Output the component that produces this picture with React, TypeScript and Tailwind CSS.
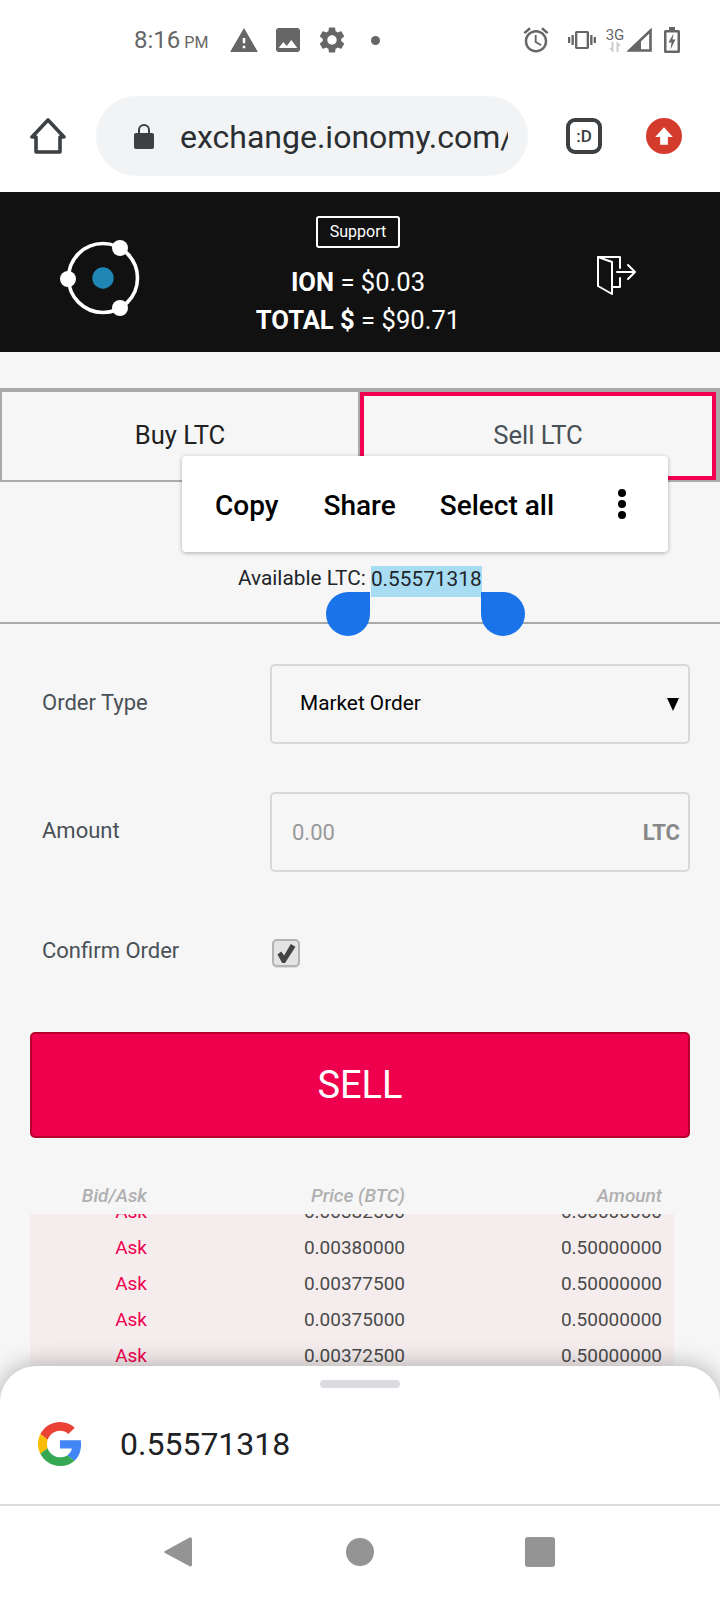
const warning = "M1 21h22L12 2 1 21zm12-3h-2v-2h2v2zm0-4h-2v-4h2v4z";
const image = "M21 19V5c0-1.1-.9-2-2-2H5c-1.1 0-2 .9-2 2v14c0 1.1.9 2 2 2h14c1.1 0 2-.9 2-2zM8.5 13.5l2.5 3.01L14.5 12l4.5 6H5l3.5-4.5z";
const gear = "M19.14 12.94c.04-.3.06-.61.06-.94 0-.32-.02-.64-.07-.94l2.03-1.58a.49.49 0 0 0 .12-.61l-1.92-3.32a.488.488 0 0 0-.59-.22l-2.39.96c-.5-.38-1.03-.7-1.62-.94l-.36-2.54a.484.484 0 0 0-.48-.41h-3.84c-.24 0-.43.17-.47.41l-.36 2.54c-.59.24-1.13.57-1.62.94l-2.39-.96c-.22-.08-.47 0-.59.22L2.74 8.87c-.12.21-.08.47.12.61l2.03 1.58c-.05.3-.09.63-.09.94s.02.64.07.94l-2.03 1.58a.49.49 0 0 0-.12.61l1.92 3.32c.12.22.37.29.59.22l2.39-.96c.5.38 1.03.7 1.62.94l.36 2.54c.05.24.24.41.48.41h3.84c.24 0 .44-.17.47-.41l.36-2.54c.59-.24 1.13-.56 1.62-.94l2.39.96c.22.08.47 0 .59-.22l1.92-3.32c.12-.22.07-.47-.12-.61l-2.01-1.58zM12 15.6c-1.98 0-3.6-1.62-3.6-3.6s1.62-3.6 3.6-3.6 3.6 1.62 3.6 3.6-1.62 3.6-3.6 3.6z";
const alarm = "M22 5.72l-4.6-3.86-1.29 1.53 4.6 3.86L22 5.72zM7.88 3.39L6.6 1.86 2 5.71l1.29 1.53 4.59-3.85zM12.5 8H11v6l4.75 2.85.75-1.23-4-2.37V8zM12 4c-4.97 0-9 4.03-9 9s4.02 9 9 9c4.97 0 9-4.03 9-9s-4.03-9-9-9zm0 16c-3.87 0-7-3.13-7-7s3.13-7 7-7 7 3.13 7 7-3.13 7-7 7z";
const vibrate = "M0 15h2V9H0v6zm3 2h2V7H3v10zm19-8v6h2V9h-2zm-3 8h2V7h-2v10zM16.5 3h-9C6.67 3 6 3.67 6 4.5v15c0 .83.67 1.5 1.5 1.5h9c.83 0 1.5-.67 1.5-1.5v-15c0-.83-.67-1.5-1.5-1.5zM16 19H8V5h8v14z";

function M({ d, w, h, c = "" }: { d: string; w: string; h: string; c?: string }) {
  return (
    <svg viewBox="0 0 24 24" className={`${w} ${h} ${c}`} preserveAspectRatio="none" fill="#666666">
      <path d={d} />
    </svg>
  );
}

const rows = [
  ["0.00382500", "-mt-[20px]"],
  ["0.00380000", ""],
  ["0.00377500", ""],
  ["0.00375000", ""],
  ["0.00372500", ""],
];

export default function App() {
  return (
    <div className="relative h-[1600px] w-[720px] overflow-hidden bg-[#f6f6f6] font-['Roboto',sans-serif]">
      {/* status bar */}
      <div className="flex h-[96px] items-start bg-white pt-[26px]">
        <div className="flex h-[28px] items-center">
          <div className="ml-[134px] flex w-[94px] items-baseline pt-[3px] text-[#666666]">
            <span className="text-[24px] leading-[28px]">8:16</span>
            <span className="ml-[4px] text-[16px] leading-[28px]">PM</span>
          </div>
          <svg viewBox="1 2 22 19" className="ml-[2px] h-[24px] w-[28px]" fill="#666666"><path d={warning} /></svg>
          <svg viewBox="3 3 18 18" className="ml-[18px] h-[24px] w-[24px]" fill="#666666"><path d={image} /></svg>
          <svg viewBox="2.5 2 19 20" className="ml-[19px] h-[26px] w-[26px]" fill="#666666"><path d={gear} /></svg>
          <div className="ml-[26px] h-[9px] w-[9px] rounded-full bg-[#666666]" />
        </div>
        <div className="ml-[141px] flex h-[28px] items-center">
          <M d={alarm} w="w-[30px]" h="h-[30px]" />
          <M d={vibrate} w="w-[28px]" h="h-[24px]" c="ml-[17px]" />
          <div className="ml-[9px] h-[26px] w-[20px] self-end">
            <span className="block text-center text-[15px] leading-[14px] text-[#666666]">3G</span>
            <svg viewBox="0 0 20 10" className="h-[10px] w-[20px]" fill="#cccccc">
              <path d="M6.5 0h2v10h-1L4 6h2.5zM11.5 10h2V4H16l-3.5-4h-1z" />
            </svg>
          </div>
          <svg viewBox="0 0 25 24" className="ml-[2px] h-[24px] w-[25px]" fill="none">
            <path d="M23.5 2.5v20H2.5z" stroke="#666666" strokeWidth="2.6" />
            <path d="M2.5 22.5L14 11v11.5z" fill="#666666" />
          </svg>
          <svg viewBox="0 0 16 26" className="ml-[12px] h-[26px] w-[16px]">
            <path d="M5 0h6v3h3.5A1.5 1.5 0 0 1 16 4.5v20a1.5 1.5 0 0 1-1.5 1.5h-13A1.5 1.5 0 0 1 0 24.5v-20A1.5 1.5 0 0 1 1.5 3H5z" fill="#666666" />
            <rect x="2.5" y="5.5" width="11" height="18" fill="#ffffff" />
            <path d="M9.5 6.5L4.5 15.5h3l-1 7 5-10h-3z" fill="#666666" />
          </svg>
        </div>
      </div>

      {/* browser toolbar */}
      <div className="flex h-[96px] items-start bg-white">
        <svg viewBox="0 0 36 36" className="ml-[30px] mt-[22px] h-[36px] w-[36px]" fill="none">
          <path d="M18 2L2 19h4v15h24V19h4z" stroke="#3c4043" strokeWidth="3.6" strokeLinejoin="round" />
        </svg>
        <div className="ml-[30px] flex h-[80px] w-[432px] items-center rounded-full bg-[#f1f3f4] pl-[38px]">
          <svg viewBox="0 0 20 26" className="h-[26px] w-[20px]" fill="#3c4043">
            <path d="M2 10h2V7a6 6 0 0 1 12 0v3h2a2 2 0 0 1 2 2v12a2 2 0 0 1-2 2H2a2 2 0 0 1-2-2V12a2 2 0 0 1 2-2zm4 0h8V7a4 4 0 0 0-8 0z" />
          </svg>
          <div className="ml-[26px] w-[328px] overflow-hidden whitespace-nowrap pt-[2px] text-[32px] leading-[40px] text-[#2b2e31]">exchange.ionomy.com/</div>
        </div>
        <div className="ml-[38px] mt-[22px] flex h-[36px] w-[36px] items-center justify-center rounded-[9px] border-[4px] border-[#3c4043] text-[17px] font-medium leading-none text-[#3c4043]">:D</div>
        <div className="ml-[44px] mt-[22px] flex h-[36px] w-[36px] items-center justify-center rounded-full bg-[#d33b2c]">
          <svg viewBox="0 0 20 20" className="h-[22px] w-[22px]" fill="#ffffff"><path d="M10 2l8 9h-4.5v7h-7v-7H2z" /></svg>
        </div>
      </div>

      {/* site header */}
      <div className="flex h-[160px] items-start bg-[#111111] text-white">
        <div className="w-[200px] pl-[58px] pt-[42px]">
          <svg viewBox="0 0 88 84" className="h-[84px] w-[88px]">
            <circle cx="45" cy="44" r="34.5" fill="none" stroke="#ffffff" strokeWidth="3.6" />
            <circle cx="62" cy="14" r="8" fill="#ffffff" />
            <circle cx="10" cy="45" r="8" fill="#ffffff" />
            <circle cx="62" cy="74" r="8" fill="#ffffff" />
            <circle cx="45" cy="44" r="10.7" fill="#1f86b5" />
          </svg>
        </div>
        <div className="flex w-[316px] flex-col items-center pt-[24px]">
          <div className="flex h-[32px] w-[84px] items-center justify-center rounded-[3px] border-2 border-white text-[16px]">Support</div>
          <div className="mt-[15px] text-[25.6px] leading-[38px]"><b className="font-bold">ION</b> = $0.03</div>
          <div className="text-[25.6px] leading-[38px]"><b className="font-bold">TOTAL $</b> = $90.71</div>
        </div>
        <svg viewBox="0 0 42 42" className="ml-[79px] mt-[63px] h-[42px] w-[42px]" fill="none" stroke="#ffffff" strokeWidth="2" strokeLinejoin="round" strokeLinecap="round">
          <path d="M3 2h22v11M25 23v9h-8" />
          <path d="M3 2l14 5v32L3 31z" />
          <path d="M22 17h18M33 10l7 7-7 7" />
        </svg>
      </div>

      {/* buy / sell */}
      <div className="mt-[36px] flex h-[94px] border-b-[2px] border-t-[4px] border-[#aaaaaa]">
        <div className="flex w-[360px] items-center justify-center border-x-[2px] border-[#aaaaaa] pb-[2px] text-[25.6px] text-[#222222]">Buy LTC</div>
        <div className="flex w-[360px] bg-[#aaaaaa] pr-[4px]">
          <div className="flex w-full items-center justify-center border-[4px] border-[#f0004e] bg-[#f6f6f6] pb-[2px] text-[25.6px] text-[#495057]">Sell LTC</div>
        </div>
      </div>

      {/* available */}
      <div className="mt-[85px] flex h-[24px] items-center pl-[238px] text-[20.8px] text-[#212529]">
        Available LTC:&nbsp;<span className="mt-[4px] inline-block h-[31px] bg-[#a8dcf3] leading-[27px]">0.55571318</span>
      </div>
      <div className="mt-[31px] h-[2px] bg-[#aaaaaa]" />

      {/* form */}
      <div className="mt-[40px] flex h-[80px] items-center pl-[42px]">
        <div className="w-[228px] pb-[4px] text-[22px] text-[#495057]">Order Type</div>
        <div className="flex h-full w-[420px] items-center justify-between rounded-[5px] border-2 border-[#d8d8d8] pl-[28px] pr-[9px] text-[20.8px] text-black">
          <span>Market Order</span>
          <span className="h-0 w-0 border-x-[6px] border-t-[13px] border-x-transparent border-t-black" />
        </div>
      </div>
      <div className="mt-[48px] flex h-[80px] items-center pl-[42px]">
        <div className="w-[228px] pb-[4px] text-[22px] text-[#495057]">Amount</div>
        <div className="flex h-full w-[420px] items-center justify-between rounded-[5px] border-2 border-[#d8d8d8] pl-[20px] pr-[8px] text-[22px]">
          <span className="text-[#999999]">0.00</span>
          <span className="font-bold text-[#888888]">LTC</span>
        </div>
      </div>
      <div className="mt-[66px] flex h-[30px] items-center pl-[42px]">
        <div className="w-[230px] pb-[6px] text-[22px] text-[#495057]">Confirm Order</div>
        <div className="flex h-[28px] w-[28px] items-center justify-center rounded-[5px] border-2 border-[#b4b4b4] bg-[#e4e4e4] shadow-[0_1px_0_#dddddd]">
          <svg viewBox="0 0 20 20" className="h-[19px] w-[20px]" fill="#444444"><path d="M1 11l4-3 3 4L15 0l5 3L9 20H6z" /></svg>
        </div>
      </div>

      {/* sell button */}
      <div className="mx-[30px] mt-[64px] flex h-[106px] items-center justify-center rounded-[5px] border-2 border-[#b5002e] bg-[#ee004e] text-[38px] text-white">SELL</div>

      {/* order table */}
      <div className="mx-[30px] mt-[44px] grid h-[32px] w-[644px] grid-cols-[117px_258px_257px] items-center pb-[4px] text-right text-[19px] font-medium italic leading-[28px] text-[#b0b0b0]">
        <div>Bid/Ask</div>
        <div>Price (BTC)</div>
        <div>Amount</div>
      </div>
      <div className="mx-[30px] h-[200px] w-[644px] overflow-hidden bg-[#f5eded] text-[19px]">
        {rows.map(([p, m]) => (
          <div key={p} className={`grid h-[36px] grid-cols-[117px_258px_257px] items-center text-right text-[#4a4a4a] ${m}`}>
            <div className="text-[#f0004e]">Ask</div>
            <div>{p}</div>
            <div>0.50000000</div>
          </div>
        ))}
      </div>

      {/* text selection overlays */}
      <div className="absolute left-[182px] top-[456px] flex h-[96px] w-[486px] items-center rounded-[4px] bg-white text-[28px] font-medium text-black shadow-[0_1px_4px_rgba(0,0,0,0.3)]">
        <span className="ml-[33px] pt-[4px]">Copy</span>
        <span className="ml-[45px] pt-[4px]">Share</span>
        <span className="ml-[44px] pt-[4px]">Select all</span>
        <span className="ml-[64px] flex flex-col gap-[3px]">
          <i className="h-[8px] w-[8px] rounded-full bg-black" />
          <i className="h-[8px] w-[8px] rounded-full bg-black" />
          <i className="h-[8px] w-[8px] rounded-full bg-black" />
        </span>
      </div>
      <div className="absolute left-[326px] top-[592px] h-[44px] w-[44px] rounded-[22px] rounded-tr-none bg-[#1a73e8]" />
      <div className="absolute left-[481px] top-[592px] h-[44px] w-[44px] rounded-[22px] rounded-tl-none bg-[#1a73e8]" />

      {/* bottom sheet */}
      <div className="absolute inset-x-0 top-[1366px] h-[234px] rounded-t-[36px] bg-white shadow-[0_0_24px_rgba(0,0,0,0.3)]">
        <div className="mx-auto mt-[14px] h-[8px] w-[80px] rounded-full bg-[#dadce0]" />
        <div className="mb-[4px] flex h-[112px] items-center pl-[38px]">
          <svg viewBox="0 0 48 48" className="h-[44px] w-[44px]">
            <path fill="#EA4335" d="M24 9.5c3.54 0 6.71 1.22 9.21 3.6l6.85-6.85C35.9 2.38 30.47 0 24 0 14.62 0 6.51 5.38 2.56 13.22l7.98 6.19C12.43 13.72 17.74 9.5 24 9.5z" />
            <path fill="#4285F4" d="M46.98 24.55c0-1.57-.15-3.09-.38-4.55H24v9.02h12.94c-.58 2.96-2.26 5.48-4.78 7.18l7.73 6c4.51-4.18 7.09-10.36 7.09-17.65z" />
            <path fill="#FBBC05" d="M10.53 28.59c-.48-1.45-.76-2.99-.76-4.59s.27-3.14.76-4.59l-7.98-6.19C.92 16.46 0 20.12 0 24c0 3.88.92 7.54 2.56 10.78l7.97-6.19z" />
            <path fill="#34A853" d="M24 48c6.48 0 11.93-2.13 15.89-5.81l-7.73-6c-2.15 1.45-4.92 2.3-8.16 2.3-6.26 0-11.57-4.22-13.47-9.91l-7.98 6.19C6.51 42.62 14.62 48 24 48z" />
          </svg>
          <span className="ml-[38px] text-[32px] text-[#202124]">0.55571318</span>
        </div>
        <div className="h-[2px] bg-[#dddddd]" />
        <div className="flex h-[92px] items-center">
          <svg viewBox="0 0 28 32" className="ml-[164px] h-[32px] w-[28px]" fill="#949494"><path d="M27 1.5A1.5 1.5 0 0 1 28 3v26a1.5 1.5 0 0 1-2.4 1.2L1 17a1.2 1.2 0 0 1 0-2L25.6 1.6A1.5 1.5 0 0 1 27 1.5z" /></svg>
          <div className="ml-[154px] h-[28px] w-[28px] rounded-full bg-[#949494]" />
          <div className="ml-[151px] h-[30px] w-[30px] rounded-[3px] bg-[#949494]" />
        </div>
      </div>
    </div>
  );
}
